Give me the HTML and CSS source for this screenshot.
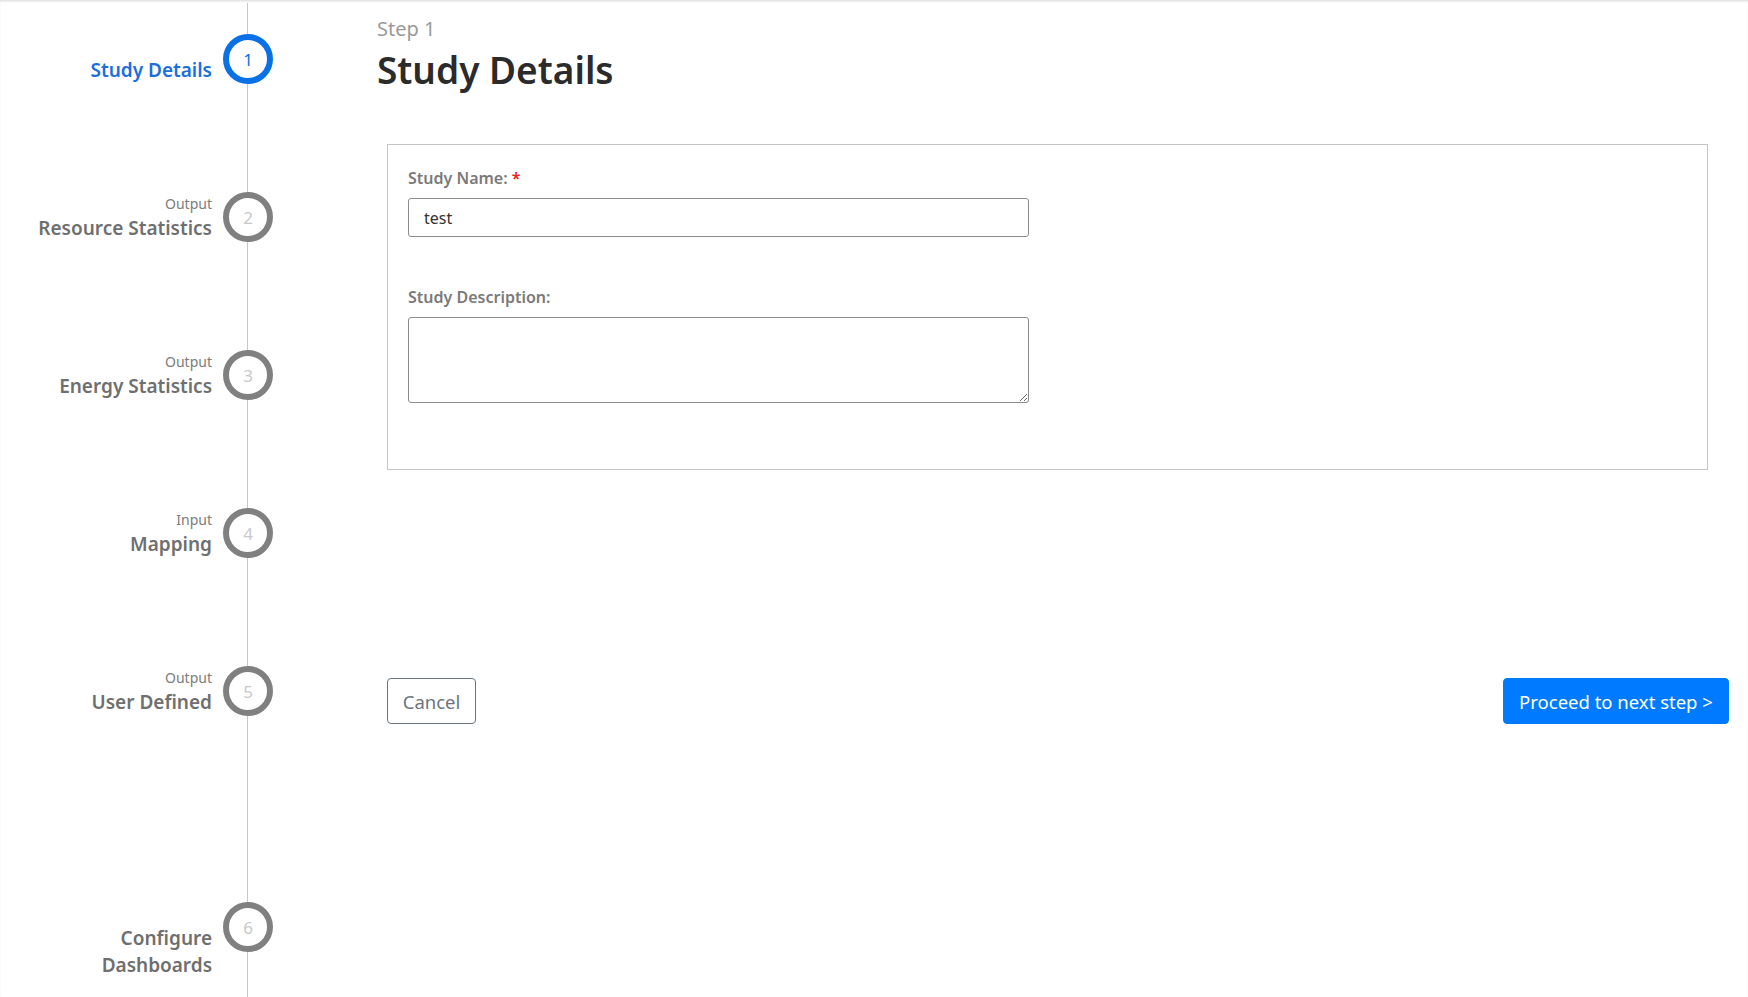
FILE: index.html
```html
<!DOCTYPE html>
<html lang="en">
<head>
    <meta charset="UTF-8">
    <title>Create Study</title>
    <link rel="stylesheet" href="styles.css">
</head>
<body>

<div class="page">
    <div class="steps">
        <div class="step active">
            <div class="step-label">
                <div class="step-type"></div>
                <div class="step-name">Study Details</div>
            </div>
            <div class="step-circle">1</div>
        </div>
        <div class="step">
            <div class="step-label">
                <div class="step-type">Output</div>
                <div class="step-name">Resource Statistics</div>
            </div>
            <div class="step-circle">2</div>
        </div>
        <div class="step">
            <div class="step-label">
                <div class="step-type">Output</div>
                <div class="step-name">Energy Statistics</div>
            </div>
            <div class="step-circle">3</div>
        </div>
        <div class="step">
            <div class="step-label">
                <div class="step-type">Input</div>
                <div class="step-name">Mapping</div>
            </div>
            <div class="step-circle">4</div>
        </div>
        <div class="step tall">
            <div class="step-label">
                <div class="step-type">Output</div>
                <div class="step-name">User Defined</div>
            </div>
            <div class="step-circle">5</div>
        </div>
        <div class="step last">
            <div class="step-label">
                <div class="step-type"></div>
                <div class="step-name">Configure<br>Dashboards</div>
            </div>
            <div class="step-circle">6</div>
        </div>
    </div>

    <div class="main">
        <div class="step-no">Step 1</div>
        <h1>Study Details</h1>

        <div class="card">
            <label for="studyName">Study Name: <span class="req">*</span></label>
            <input id="studyName" value="test">

            <label for="studyDesc" class="second">Study Description:</label>
            <textarea id="studyDesc"></textarea>
        </div>

        <div class="actions">
            <button class="btn-cancel">Cancel</button>
            <button class="btn-next">Proceed to next step &gt;</button>
        </div>
    </div>
</div>

</body>
</html>
```

FILE: styles.css
```css
body {
    margin: 0;
    font-family: "Noto Sans", "Open Sans", sans-serif;
    background: #fff;
    border-top: 1px solid #e4e4e4;
    box-shadow: inset 0 1px 2px #eee;
    overflow: hidden;
}

.page {
    display: flex;
    height: 996px;
}

/* left stepper */
.steps {
    position: relative;
    width: 273px;
    flex-shrink: 0;
    padding-top: 33px;
}

.steps::before {
    content: "";
    position: absolute;
    left: 247px;
    top: 2px;
    bottom: 0;
    width: 1px;
    background: #c8c8c8;
}

.step {
    display: flex;
    justify-content: flex-end;
    gap: 11px;
    height: 158px;
}

.step.tall {
    height: 236px;
}

.step.last {
    height: auto;
}

.step-label {
    text-align: right;
    color: #6f6f6f;
    padding-top: 1px;
}

.step-type {
    font-size: 14px;
    line-height: 22px;
    height: 22px;
    color: #7c7c7c;
}

.step-name {
    font-size: 19px;
    line-height: 27px;
    font-weight: 600;
}

.step-circle {
    position: relative;
    z-index: 1;
    width: 50px;
    height: 50px;
    box-sizing: border-box;
    border: 6px solid #808080;
    border-radius: 50%;
    background: #fff;
    color: #c9c9c9;
    font-size: 17px;
    display: flex;
    align-items: center;
    justify-content: center;
}

.step.active .step-name {
    color: #1a6ee0;
}

.step.active .step-circle {
    border-color: #0a70e6;
    color: #0a70e6;
}

/* main area */
.main {
    flex: 1;
    padding: 13px 19px 0 104px;
}

.step-no {
    font-size: 20px;
    line-height: 30px;
    color: #9a9a9a;
}

h1 {
    margin: 0;
    font-size: 37px;
    line-height: 52px;
    font-weight: 600;
    color: #2b2b2b;
}

.card {
    margin: 48px 21px 0 10px;
    border: 1px solid #c4c4c4;
    padding: 22px 20px 66px;
}

.card label {
    display: block;
    font-size: 16px;
    font-weight: 600;
    line-height: 22px;
    color: #7a7a7a;
    margin-bottom: 9px;
}

.card label.second {
    margin-top: 49px;
}

.req {
    color: #e8202a;
}

.card input, .card textarea {
    display: block;
    box-sizing: border-box;
    width: 621px;
    border: 1px solid #8c8c8c;
    border-radius: 3px;
    font-family: inherit;
    font-size: 16px;
    color: #333;
    padding: 0 15px;
}

.card input {
    height: 39px;
}

.card textarea {
    height: 86px;
    padding-top: 8px;
}

.actions {
    display: flex;
    justify-content: space-between;
    margin: 208px 0 0 10px;
}

.actions button {
    height: 46px;
    font-family: inherit;
    font-size: 18.5px;
    border-radius: 4px;
    cursor: pointer;
}

.btn-cancel {
    width: 89px;
    background: #fff;
    border: 1px solid #6c757d;
    color: #6c757d;
}

.btn-next {
    width: 226px;
    background: #007bff;
    border: 1px solid #007bff;
    color: #fff;
}
```
